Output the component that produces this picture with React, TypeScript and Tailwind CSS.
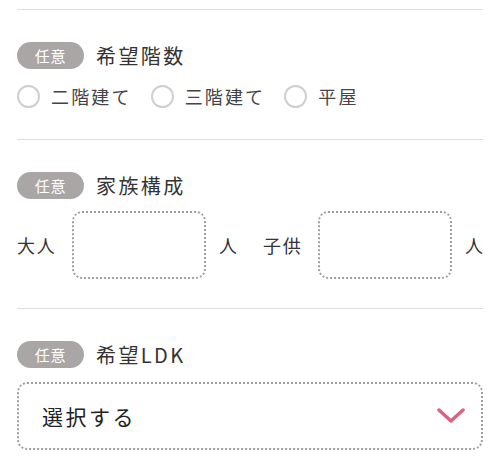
import React from 'react';

const Badge: React.FC = () => (
    <span className="flex h-[27px] w-[67px] items-center justify-center rounded-full bg-[#aba6a6] text-[15px] leading-none tracking-[0.05em] text-white">
        任意
    </span>
);

const Heading: React.FC<{ title: string }> = ({ title }) => (
    <div className="flex h-[27px] items-center gap-3">
        <Badge />
        <h2 className="text-[20px] leading-none tracking-[0.12em] text-[#333]">{title}</h2>
    </div>
);

const Radio: React.FC<{ label: string }> = ({ label }) => (
    <label className="flex h-[24px] items-center gap-[11px]">
        <span className="h-[23px] w-[23px] rounded-full border-2 border-[#cfcfcf]" />
        <span className="text-[18px] leading-none tracking-[0.12em] text-[#444]">{label}</span>
    </label>
);

const CountInput: React.FC<{ label: string }> = ({ label }) => (
    <div className="flex items-center">
        <span className="w-[55px] text-[18px] leading-none tracking-[0.1em] text-[#333]">{label}</span>
        <div className="h-[68px] w-[134px] rounded-[10px] border-2 border-dotted border-[#9e9e9e]" />
        <span className="ml-[13px] text-[18px] leading-none text-[#333]">人</span>
    </div>
);

const Divider: React.FC = () => <div className="h-px bg-[#dedede]" />;

export default function App() {
    return (
        <div className="w-[500px] bg-white px-[17px] pt-[9px] font-['Noto_Sans_CJK_JP','Noto_Sans',sans-serif]">
            <Divider />

            {/* 希望階数 */}
            <section className="pt-[32px] pb-[31px]">
                <Heading title="希望階数" />
                <div className="mt-[15px] flex items-center gap-[19px]">
                    <Radio label="二階建て" />
                    <Radio label="三階建て" />
                    <Radio label="平屋" />
                </div>
            </section>

            <Divider />

            {/* 家族構成 */}
            <section className="pt-[32px] pb-[29px]">
                <Heading title="家族構成" />
                <div className="mt-[12px] flex items-center justify-between">
                    <CountInput label="大人" />
                    <CountInput label="子供" />
                </div>
            </section>

            <Divider />

            {/* 希望LDK */}
            <section className="pt-[32px]">
                <Heading title="希望LDK" />
                <button className="mt-[14px] flex h-[68px] w-full items-center justify-between rounded-[10px] border-2 border-dotted border-[#9e9e9e] pl-[23px] pr-[16px]">
                    <span className="text-[21px] leading-none tracking-[0.12em] text-[#222]">選択する</span>
                    <svg width="28" height="16" viewBox="0 0 28 16" fill="none">
                        <path d="M2 2l12 11L26 2" stroke="#d6657f" strokeWidth="3.5" strokeLinecap="round" strokeLinejoin="round" />
                    </svg>
                </button>
            </section>
        </div>
    );
}
